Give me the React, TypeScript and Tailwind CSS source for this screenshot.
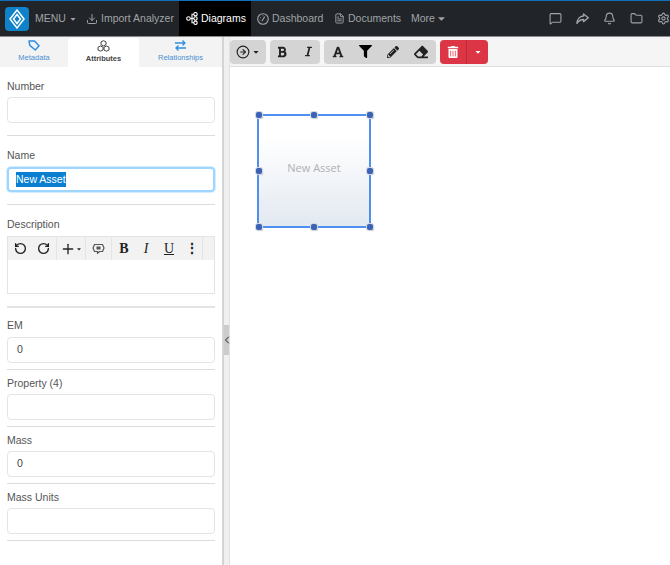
import React from "react";
import {
  ChevronLeft, CircleArrowRight, MessageSquare, Bell, Folder, Settings, Download, FileText,
  RotateCcw, RotateCw, Plus,
} from "lucide-react";
import { FaBold, FaItalic, FaFont, FaFilter, FaPencilAlt, FaEraser, FaTrashAlt, FaCaretDown } from "react-icons/fa";

const font = "font-['Liberation_Sans',Arial,sans-serif]";

function Logo() {
  return (
    <div className="w-6 h-6 ml-[5px] rounded-sm bg-[#0f83c9] flex items-center justify-center shrink-0">
      <svg width="16" height="20" viewBox="0 0 16 20" fill="none" stroke="white" strokeWidth="1.5">
        <path d="M8 1 15 10 8 19 1 10Z" />
        <path d="M8 5.500 11.500 10 8 14.500 4.500 10Z" />
      </svg>
    </div>
  );
}

function DiagramIcon() {
  return (
    <svg width="12" height="13" viewBox="0 0 12 13" fill="none" stroke="white" strokeWidth="1.1" className="shrink-0">
      <circle cx="2.500" cy="6.500" r="1.800" />
      <circle cx="9.500" cy="2.200" r="1.700" />
      <circle cx="9.500" cy="6.500" r="1.700" />
      <circle cx="9.500" cy="10.800" r="1.700" />
      <path d="M4.300 6.500H7.800M6 6.500V2.200H7.800M6 6.500V10.800H7.800" />
    </svg>
  );
}

function GaugeIcon() {
  return (
    <svg width="12" height="12" viewBox="0 0 12 12" fill="none" stroke="#a0a3a6" strokeWidth="1.100" className="shrink-0">
      <circle cx="6" cy="6" r="5.300" />
      <path d="M4.800 8.200 7.800 3.600M3 4.800h.8M6 2.600v.6M2.600 7h.6M9 7h.4" />
    </svg>
  );
}

function ShareIcon() {
  return (
    <svg width="13" height="12" viewBox="0 0 13 12" fill="none" stroke="#a0a3a6" strokeWidth="1.400" strokeLinejoin="round" className="shrink-0">
      <path d="M7.500 1 12.300 4.800 7.500 8.600V6.500C4.500 6.500 2.800 7.500 1 10.500 1 6.500 3.500 3.300 7.500 3Z" />
    </svg>
  );
}

function TagIcon() {
  return (
    <svg width="12" height="11" viewBox="0 0 12 11" fill="none" stroke="#2f8fe0" strokeWidth="1.500" strokeLinejoin="round">
      <path d="M1 1H6.500L11 5.800 7.300 10 1.800 5.400Z" />
    </svg>
  );
}

function CubesIcon() {
  return (
    <svg width="13" height="12" viewBox="0 0 13 12" fill="none" stroke="#444" strokeWidth="1">
      <path d="M6.500 .7 9 1.900V4.700L6.500 5.900 4 4.700V1.900Z" />
      <path d="M3.500 6 6 7.200V10L3.500 11.200 1 10V7.200Z" />
      <path d="M9.500 6 12 7.200V10L9.500 11.200 7 10V7.200Z" />
    </svg>
  );
}

function SwapIcon() {
  return (
    <svg width="11" height="11" viewBox="0 0 11 11" fill="none" stroke="#2f8fe0" strokeWidth="1.300">
      <path d="M0 3H10M7.500 .5 10 3 7.500 5.500" />
      <path d="M11 8H1M3.500 5.500 1 8 3.500 10.500" />
    </svg>
  );
}

function TemplateIcon() {
  return (
    <svg width="13" height="11" viewBox="0 0 13 11" fill="none" stroke="#555" strokeWidth="1.200">
      <path d="M2.500 1.500H10.500L12 5 10.500 8.500H7.500L5.500 10.300V8.500H2.500L1 5Z" />
      <rect x="4.500" y="3.500" width="4" height="3" fill="#555" stroke="none" />
    </svg>
  );
}

function NavItem({ icon, label, active, cls }: { icon: React.ReactNode; label: string; active?: boolean; cls: string }) {
  return (
    <div className={`flex items-center gap-[3px] h-full text-[10.5px] shrink-0 ${active ? "bg-black text-white" : "text-[#a0a3a6]"} ${cls}`}>
      {icon}
      <span>{label}</span>
    </div>
  );
}

function Field({ label, value, cls, gap }: { label: string; value?: string; cls: string; gap: string }) {
  return (
    <div className={cls}>
      <div className={`text-[10.5px] leading-[13px] text-[#555] ${gap}`}>{label}</div>
      <div className="h-[26px] border border-[#e2e4e8] rounded-[4px] bg-white px-[9px] flex items-center text-[10.5px] text-[#444]">{value}</div>
    </div>
  );
}

const Hr = ({ cls = "" }: { cls?: string }) => <div className={`h-px bg-[#dcdcdc] ${cls}`} />;

function Handle({ cls }: { cls: string }) {
  return <div className={`absolute w-[6px] h-[6px] rounded-[2px] bg-[#3a63b8] shadow-[0_0_0_1px_#d4d7dc,1px_1px_1px_#aaa] ${cls}`} />;
}

const ToolGroup = ({ children, cls }: { children: React.ReactNode; cls: string }) => (
  <div className={`h-6 rounded-[4px] bg-[#d4d4d4] flex items-center text-[#222] shrink-0 ${cls}`}>{children}</div>
);

export default function App() {
  return (
    <div className={`${font} w-[670px] h-[565px] overflow-hidden flex flex-col bg-white`}>
      <header className="h-[37px] shrink-0 bg-[#212529] border-t border-[#0f6fb8] border-b border-b-[#8a8a8a] flex items-center">
        <Logo />
        <div className="flex items-center h-full w-[51px] shrink-0 text-[10.5px] text-[#a0a3a6] pl-[6px] gap-[3px]">
          MENU <FaCaretDown size={8} />
        </div>
        <NavItem icon={<Download size={12} className="shrink-0" />} label="Import Analyzer" cls="w-[99px] pl-[6px]" />
        <NavItem icon={<DiagramIcon />} label="Diagrams" active cls="w-[72px] pl-[7px]" />
        <NavItem icon={<GaugeIcon />} label="Dashboard" cls="w-[77px] pl-[6px]" />
        <NavItem icon={<FileText size={11} className="shrink-0" />} label="Documents" cls="w-[83px] pl-[6px]" />
        <div className="flex items-center gap-[1px] h-full text-[10.5px] text-[#a0a3a6] shrink-0">
          More <FaCaretDown size={11} />
        </div>
        <div className="ml-auto flex items-center gap-[14px] text-[#a0a3a6] w-[121px] shrink-0">
          <MessageSquare size={13} className="shrink-0" />
          <ShareIcon />
          <Bell size={13} className="shrink-0" />
          <Folder size={13} className="shrink-0" />
          <Settings size={13} className="shrink-0" />
        </div>
      </header>

      <div className="flex flex-1 min-h-0">
        <aside className="w-[222px] shrink-0 flex flex-col">
          <div className="h-[30px] bg-[#f3f3f3] flex">
            <div className="w-[68px] flex flex-col items-center justify-center text-[#4a90d0] text-[7.5px] gap-[1px]">
              <TagIcon />
              Metadata
            </div>
            <div className="w-[71px] bg-white rounded-t-[3px] mt-px flex flex-col items-center justify-center text-[#444] font-bold text-[7.5px] gap-[1px]">
              <CubesIcon />
              Attributes
            </div>
            <div className="flex-1 flex flex-col items-center justify-center text-[#4a90d0] text-[7.5px] gap-[1px]">
              <SwapIcon />
              Relationships
            </div>
          </div>
          <div className="px-[7px]">
            <Field label="Number" cls="mt-[13px]" gap="mb-[4px]" />
            <Hr cls="mt-3" />
            <div className="mt-[13px]">
              <div className="text-[10.5px] leading-[13px] text-[#555] mb-[5px]">Name</div>
              <div className="h-[25px] border-2 border-[#9fd6ff] rounded-[4px] shadow-[0_0_0_1px_#d5edff] bg-white px-[7px] flex items-center text-[10.5px]">
                <span className="bg-[#0a7fd2] text-white">New Asset</span>
              </div>
            </div>
            <Hr cls="mt-3" />
            <div className="mt-[13px]">
              <div className="text-[10.5px] leading-[13px] text-[#555] mb-[5px]">Description</div>
              <div className="h-[58px] border border-[#e4e4e4] flex flex-col">
                <div className="h-[23px] bg-[#f2f2f2] flex items-center text-[#222] shrink-0">
                  <div className="w-[49px] h-full flex items-center justify-center gap-[10px] border-r border-[#e4e4e4]">
                    <RotateCcw size={13} strokeWidth={2.5} className="shrink-0" />
                    <RotateCw size={13} strokeWidth={2.5} className="shrink-0" />
                  </div>
                  <div className="w-[29px] h-full flex items-center justify-center border-r border-[#e4e4e4]">
                    <Plus size={16} className="shrink-0" />
                    <FaCaretDown size={6} className="shrink-0" />
                  </div>
                  <div className="w-[26px] h-full flex items-center justify-center border-r border-[#e4e4e4]">
                    <TemplateIcon />
                  </div>
                  <div className="w-[91px] h-full flex items-center border-r border-[#e4e4e4] pl-px font-['Liberation_Serif',serif] text-[14px]">
                    <span className="w-[22px] font-bold text-center">B</span>
                    <span className="w-[22px] italic text-center">I</span>
                    <span className="w-[24px] underline text-center">U</span>
                    <span className="w-[21px] text-center font-bold">⋮</span>
                  </div>
                </div>
              </div>
            </div>
            <div className="h-[2px] bg-[#e4e4e4] mt-3" />
            <Field label="EM" value="0" cls="mt-[11px]" gap="mb-[5px]" />
            <Hr cls="mt-[6px]" />
            <Field label="Property (4)" cls="mt-[7px]" gap="mb-[4px]" />
            <Hr cls="mt-[6px]" />
            <Field label="Mass" value="0" cls="mt-[7px]" gap="mb-[4px]" />
            <Hr cls="mt-[6px]" />
            <Field label="Mass Units" cls="mt-[7px]" gap="mb-[4px]" />
            <Hr cls="mt-[6px]" />
          </div>
        </aside>

        <div className="w-2 shrink-0 bg-[#f0f0f0] border-l-2 border-[#d4d4d4] border-r border-r-[#e2e2e2] flex items-start">
          <div className="mt-[288px] w-full h-[30px] bg-[#cccccc] flex items-center justify-center text-[#222]">
            <ChevronLeft size={12} strokeWidth={2} className="shrink-0" />
          </div>
        </div>

        <main className="flex-1 min-w-0 flex flex-col">
          <div className="h-[30px] shrink-0 bg-[#f5f5f5] flex items-center gap-1 border-b border-[#dedede]">
            <ToolGroup cls="w-9 justify-center gap-[2px]">
              <CircleArrowRight size={14} className="shrink-0" />
              <FaCaretDown size={8} className="shrink-0" />
            </ToolGroup>
            <ToolGroup cls="w-[50px] pl-[6px] gap-[15px]">
              <FaBold size={12} className="shrink-0" />
              <FaItalic size={11} className="shrink-0" />
            </ToolGroup>
            <ToolGroup cls="w-28 pl-2 gap-[15px]">
              <FaFont size={12} className="shrink-0" />
              <FaFilter size={13} className="text-black shrink-0" />
              <FaPencilAlt size={12} className="shrink-0" />
              <FaEraser size={14} className="shrink-0" />
            </ToolGroup>
            <div className="h-6 w-12 rounded-[4px] bg-[#dc3545] flex items-center text-white shrink-0">
              <div className="w-[27px] h-full flex items-center justify-center border-r border-[#b92c3a]">
                <FaTrashAlt size={12} />
              </div>
              <div className="flex-1 flex items-center justify-center">
                <FaCaretDown size={8} />
              </div>
            </div>
          </div>
          <div className="relative flex-1 bg-white">
            <div className="absolute left-[27px] top-[47px] w-[114px] h-[114px] border-2 border-[#4f8ff0] bg-gradient-to-b from-white from-20% to-[#e3e9f1] flex items-center justify-center text-[11px] text-[#b0b0b0] pb-[5px] font-['Open_Sans',sans-serif]">
              New Asset
            </div>
            <Handle cls="left-[26px] top-[45px]" />
            <Handle cls="left-[81px] top-[45px]" />
            <Handle cls="left-[137px] top-[45px]" />
            <Handle cls="left-[26px] top-[101px]" />
            <Handle cls="left-[137px] top-[101px]" />
            <Handle cls="left-[26px] top-[157px]" />
            <Handle cls="left-[81px] top-[157px]" />
            <Handle cls="left-[137px] top-[157px]" />
          </div>
        </main>
      </div>
    </div>
  );
}
